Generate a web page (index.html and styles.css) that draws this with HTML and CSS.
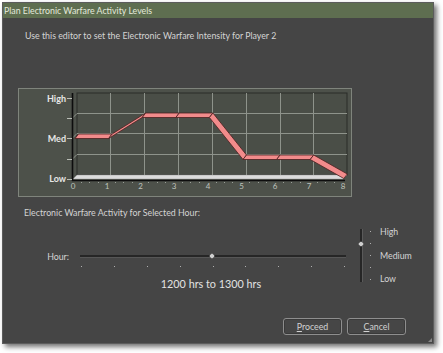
FILE: index.html
```html
<!DOCTYPE html>
<html>
<head>
<meta charset="utf-8">
<link rel="stylesheet" href="styles.css">
</head>
<body>
<div class="dialog">
  <div class="titlebar">Plan Electronic Warfare Activity Levels</div>
  <div class="content">
    <p class="intro">Use this editor to set the Electronic Warfare Intensity for Player 2</p>
    <div class="chart-panel">
      <svg class="chart" width="334" height="109" viewBox="0 0 334 109">
        <g transform="translate(-18,-88)">
          <rect x="77" y="93" width="270" height="82" fill="#4a4e47" stroke="#2a2d29" stroke-width="1"/>
          <g stroke="#8e938b" stroke-width="1">
            <line x1="77" y1="113.5" x2="347" y2="113.5"/>
            <line x1="77" y1="133.5" x2="347" y2="133.5"/>
            <line x1="77" y1="154.5" x2="347" y2="154.5"/>
            <line x1="110.5" y1="93" x2="110.5" y2="175"/>
            <line x1="144.5" y1="93" x2="144.5" y2="175"/>
            <line x1="178.5" y1="93" x2="178.5" y2="175"/>
            <line x1="212.5" y1="93" x2="212.5" y2="175"/>
            <line x1="246.5" y1="93" x2="246.5" y2="175"/>
            <line x1="280.5" y1="93" x2="280.5" y2="175"/>
            <line x1="313.5" y1="93" x2="313.5" y2="175"/>
          </g>
          <g stroke="#8e938b" stroke-width="1">
            <line x1="72" y1="118.5" x2="77" y2="113.5"/>
            <line x1="72" y1="138.5" x2="77" y2="133.5"/>
            <line x1="72" y1="159.5" x2="77" y2="154.5"/>
          </g>
          <polygon points="73,179 343,179 347,175 77,175" fill="#dcdcdc" stroke="#9a9a9a" stroke-width="0.5"/>
          <line x1="72.5" y1="93" x2="72.5" y2="181" stroke="#0d0d0d" stroke-width="1.6"/>
          <line x1="72" y1="180.5" x2="345" y2="180.5" stroke="#0d0d0d" stroke-width="1.6"/>
          <g stroke="#b8bcb5" stroke-width="1">
            <line x1="67" y1="98.5" x2="72" y2="98.5"/>
            <line x1="67" y1="118.5" x2="72" y2="118.5"/>
            <line x1="67" y1="138.5" x2="72" y2="138.5"/>
            <line x1="67" y1="159.5" x2="72" y2="159.5"/>
            <line x1="67" y1="179.5" x2="72" y2="179.5"/>
          </g>
          <g fill="#f28b8b" stroke="#4a2020" stroke-width="0.8" stroke-linejoin="round">
            <polygon points="75,138.5 108.6,138.5 112.1,134 78.5,134"/>
            <polygon points="108.6,138.5 142.2,117.5 145.7,113 112.1,134"/>
            <polygon points="142.2,117.5 175.8,117.5 179.3,113 145.7,113"/>
            <polygon points="175.8,117.5 209.4,117.5 212.9,113 179.3,113"/>
            <polygon points="209.4,117.5 243,159.5 246.5,155 212.9,113"/>
            <polygon points="243,159.5 276.6,159.5 280.1,155 246.5,155"/>
            <polygon points="276.6,159.5 310.2,159.5 313.7,155 280.1,155"/>
            <polygon points="310.2,159.5 343.8,178.5 347.3,174 313.7,155"/>
          </g>
          <g fill="#9a9f98">
            <rect x="81" y="182" width="1" height="1"/><rect x="89" y="182" width="1" height="1"/><rect x="98" y="182" width="1" height="1"/>
            <rect x="115" y="182" width="1" height="1"/><rect x="123" y="182" width="1" height="1"/><rect x="132" y="182" width="1" height="1"/>
            <rect x="148" y="182" width="1" height="1"/><rect x="157" y="182" width="1" height="1"/><rect x="165" y="182" width="1" height="1"/>
            <rect x="182" y="182" width="1" height="1"/><rect x="190" y="182" width="1" height="1"/><rect x="199" y="182" width="1" height="1"/>
            <rect x="216" y="182" width="1" height="1"/><rect x="224" y="182" width="1" height="1"/><rect x="232" y="182" width="1" height="1"/>
            <rect x="249" y="182" width="1" height="1"/><rect x="258" y="182" width="1" height="1"/><rect x="266" y="182" width="1" height="1"/>
            <rect x="283" y="182" width="1" height="1"/><rect x="291" y="182" width="1" height="1"/><rect x="300" y="182" width="1" height="1"/>
            <rect x="317" y="182" width="1" height="1"/><rect x="325" y="182" width="1" height="1"/><rect x="334" y="182" width="1" height="1"/>
          </g>
          <g class="ylab" text-anchor="end">
            <text x="66" y="101.5">High</text>
            <text x="66" y="141.5">Med</text>
            <text x="66" y="182">Low</text>
          </g>
          <g class="xlab" text-anchor="middle">
            <text x="73" y="189">0</text>
            <text x="107" y="189">1</text>
            <text x="140.5" y="189">2</text>
            <text x="174" y="189">3</text>
            <text x="208" y="189">4</text>
            <text x="241.5" y="189">5</text>
            <text x="275" y="189">6</text>
            <text x="309" y="189">7</text>
            <text x="343" y="189">8</text>
          </g>
        </g>
      </svg>
    </div>
    <p class="section-label">Electronic Warfare Activity for Selected Hour:</p>
    <div class="slider-area">
      <span class="hour-label">Hour:</span>
      <div class="hslider">
        <div class="htrack"></div>
        <div class="hticks">
          <i></i><i></i><i></i><i></i><i></i><i></i><i></i><i></i><i></i>
        </div>
        <span class="hthumb"></span>
      </div>
      <div class="vslider">
        <div class="vtrack"><span class="vthumb"></span></div>
        <div class="vticks"><i></i><i></i><i></i><i></i><i></i></div>
        <div class="vlabels"><span>High</span><span>Medium</span><span>Low</span></div>
      </div>
    </div>
    <p class="range">1200 hrs to 1300 hrs</p>
    <div class="buttons">
      <button class="btn"><u>P</u>roceed</button>
      <button class="btn"><u>C</u>ancel</button>
    </div>
    <span class="grip"></span>
  </div>
</div>
</body>
</html>
```

FILE: styles.css
```css
html, body {
  margin: 0;
  padding: 0;
  background: #ffffff;
}
body {
  width: 443px;
  height: 353px;
  overflow: hidden;
  font-family: Lato, "Noto Sans", sans-serif;
}
.dialog {
  margin: 2px 0 0 2px;
  width: 432px;
  height: 342px;
  background: #454545;
  box-shadow: 3px 3px 5px rgba(0,0,0,0.55);
  display: flex;
  flex-direction: column;
  box-sizing: border-box;
  border: 1px solid #5c5c5c;
}
.titlebar {
  height: 15px;
  background: #5e6e50;
  color: #e4eadc;
  font-size: 8.8px;
  line-height: 15px;
  padding-left: 1px;
  flex: none;
}
.content {
  position: relative;
  flex: 1;
  display: flex;
  flex-direction: column;
  color: #d4d4d4;
  font-size: 8.8px;
}
.intro {
  margin: 12px 0 0 22px;
  line-height: 12px;
}
.chart-panel {
  margin: 46px 0 0 15px;
  width: 334px;
  height: 109px;
  box-sizing: border-box;
  border: 1px solid #7f847c;
  background: #4d514a;
  position: relative;
}
.chart {
  position: absolute;
  left: -1px;
  top: -1px;
  display: block;
}
.ylab text {
  font-family: Lato, "Noto Sans", sans-serif;
  font-size: 9px;
  font-weight: bold;
  fill: #e6e6e6;
}
.xlab text {
  font-family: Lato, "Noto Sans", sans-serif;
  font-size: 8px;
  fill: #bfc3bc;
}
.section-label {
  margin: 10px 0 0 21px;
  line-height: 12px;
}
.slider-area {
  margin-top: 10px;
  height: 58px;
  display: flex;
  align-items: flex-start;
}
.hour-label {
  width: 66px;
  text-align: right;
  margin-top: 22px;
  line-height: 12px;
}
.hslider {
  position: relative;
  margin-left: 11px;
  width: 266px;
  margin-top: 26px;
}
.htrack {
  height: 2px;
  background: #262626;
  border-bottom: 1px solid #565656;
}
.hticks {
  display: flex;
  justify-content: space-between;
  padding: 0 1px;
  margin-top: 8px;
}
.hticks i, .vticks i {
  display: block;
  width: 1px;
  height: 1px;
  background: #b0b0b0;
}
.hthumb {
  position: absolute;
  left: 130px;
  top: -1px;
  width: 4px;
  height: 4px;
  border-radius: 1px;
  background: #cfcfcf;
  transform: rotate(45deg);
}
.vslider {
  display: flex;
  margin-left: 14px;
}
.vtrack {
  position: relative;
  width: 2px;
  height: 53px;
  background: #262626;
  border-right: 1px solid #5a5a5a;
}
.vthumb {
  position: absolute;
  left: -1px;
  top: 13px;
  width: 4px;
  height: 4px;
  border-radius: 1px;
  background: #cfcfcf;
  transform: rotate(45deg);
}
.vticks {
  display: flex;
  flex-direction: column;
  justify-content: space-between;
  height: 49px;
  margin: 2px 0 0 7px;
}
.vlabels {
  display: flex;
  flex-direction: column;
  justify-content: space-between;
  height: 59px;
  margin: -3px 0 0 9px;
  line-height: 12px;
}
.range {
  margin: -11px 0 0 0;
  text-align: center;
  width: 416px;
  padding-right: 14px;
  font-size: 10.8px;
  line-height: 16px;
  color: #e2e2e2;
}
.buttons {
  margin: 26px 0 0 280px;
  display: flex;
  gap: 5px;
}
.btn {
  width: 59px;
  height: 17px;
  padding: 0;
  background: #464646;
  border: 1px solid #8e8e8e;
  border-radius: 3px;
  box-shadow: inset 0 0 0 1px #3a3a3a;
  color: #d2d2d2;
  font-family: Lato, "Noto Sans", sans-serif;
  font-size: 8.8px;
  line-height: 14px;
}
.grip {
  position: absolute;
  right: 1px;
  bottom: 1px;
  width: 0;
  height: 0;
  border-left: 4px solid transparent;
  border-bottom: 4px solid #888;
}
```
